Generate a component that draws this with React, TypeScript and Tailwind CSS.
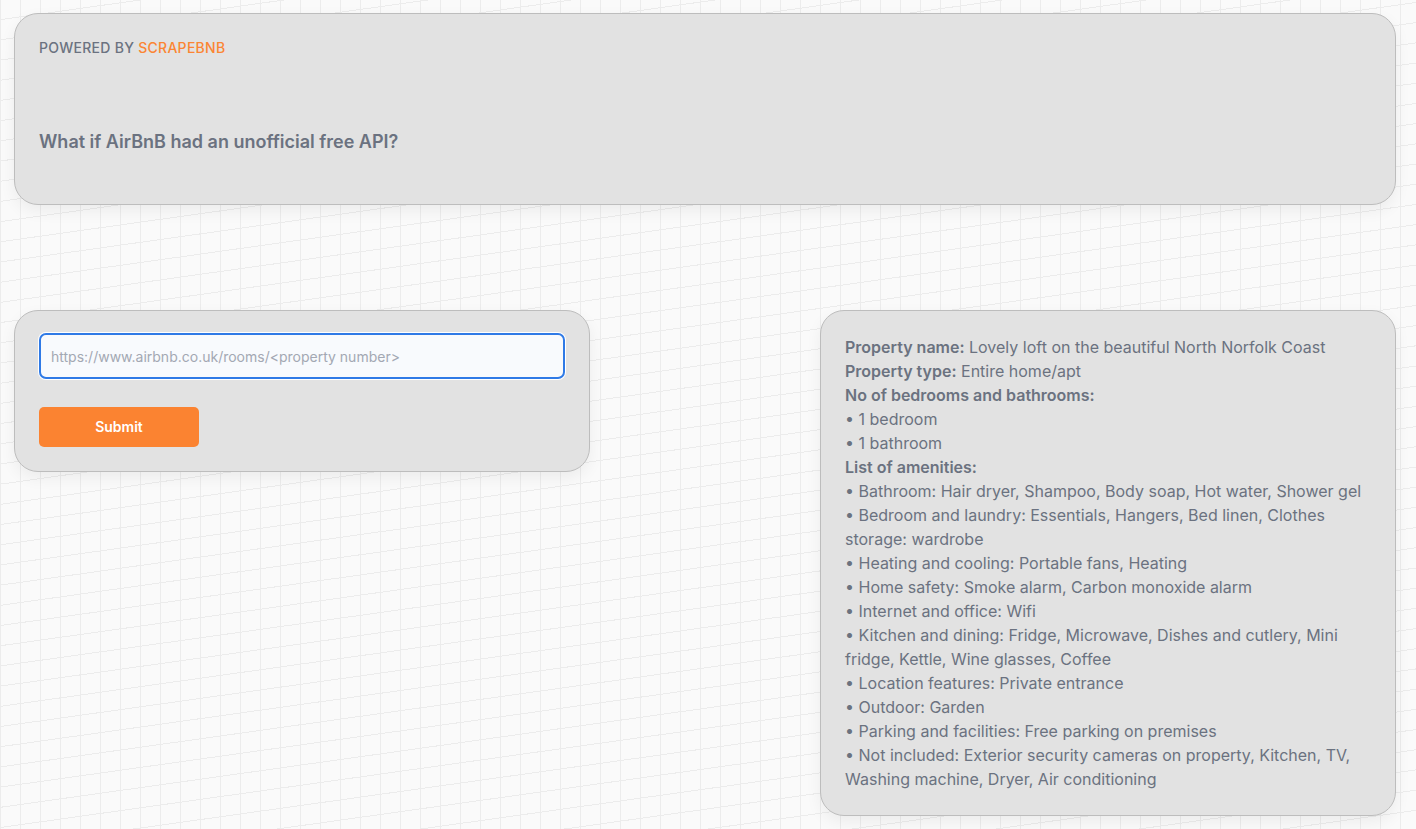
import React from 'react';

const amenities = [
  'Bathroom: Hair dryer, Shampoo, Body soap, Hot water, Shower gel',
  'Bedroom and laundry: Essentials, Hangers, Bed linen, Clothes storage: wardrobe',
  'Heating and cooling: Portable fans, Heating',
  'Home safety: Smoke alarm, Carbon monoxide alarm',
  'Internet and office: Wifi',
  'Kitchen and dining: Fridge, Microwave, Dishes and cutlery, Mini fridge, Kettle, Wine glasses, Coffee',
  'Location features: Private entrance',
  'Outdoor: Garden',
  'Parking and facilities: Free parking on premises',
  'Not included: Exterior security cameras on property, Kitchen, TV, Washing machine, Dryer, Air conditioning',
];

const card =
  'rounded-[24px] border border-[#bdbdbd] bg-[#e2e2e2] shadow-[0_6px_16px_rgba(0,0,0,0.06)]';

function App() {
  return (
    <div
      className="min-h-screen bg-[#fafafa] bg-[linear-gradient(to_right,#ececec_1px,transparent_1px),repeating-linear-gradient(352deg,transparent_0_19px,#ececec_19px_20px)] bg-[size:20px_100%,100%_100%] pl-[14px] pr-[20px] pt-[13px] pb-[14px] font-['Inter',sans-serif] text-[#6b7280]">
      {/* header */}
      <div className={`${card} px-6 pt-6 pb-12`}>
        <p className="text-sm leading-5 font-medium tracking-[0.02em]">
          POWERED BY <span className="text-[#fb8533]">SCRAPEBNB</span>
        </p>
        <h1 className="mt-[70px] text-lg leading-7 font-semibold">
          What if AirBnB had an unofficial free API?
        </h1>
      </div>

      <div className="mt-[105px] flex items-start justify-between">
        {/* form */}
        <div className={`${card} w-[576px] px-6 pt-[22px] pb-6`}>
          <input
            autoFocus
            type="text"
            placeholder="https://www.airbnb.co.uk/rooms/<property number>"
            className="block h-[46px] w-full rounded-[7px] border-2 border-[#2f7ae6] bg-[#f8fafd] px-[10px] text-sm text-gray-700 shadow-[0_0_0_1px_#ffffff] outline-none placeholder:text-[#a3a8b3]"
          />
          <button className="mt-[28px] block h-10 w-40 rounded-[5px] bg-[#fb8331] text-sm font-semibold text-white">
            Submit
          </button>
        </div>

        {/* result */}
        <div className={`${card} w-[576px] px-6 py-6 text-base leading-6`}>
          <p>
            <span className="font-semibold">Property name:</span> Lovely loft on the
            beautiful North Norfolk Coast
          </p>
          <p>
            <span className="font-semibold">Property type:</span> Entire home/apt
          </p>
          <p className="font-semibold">No of bedrooms and bathrooms:</p>
          <p>• 1 bedroom</p>
          <p>• 1 bathroom</p>
          <p className="font-semibold">List of amenities:</p>
          {amenities.map((a) => (
            <p key={a}>• {a}</p>
          ))}
        </div>
      </div>
    </div>
  );
}

export default App;
